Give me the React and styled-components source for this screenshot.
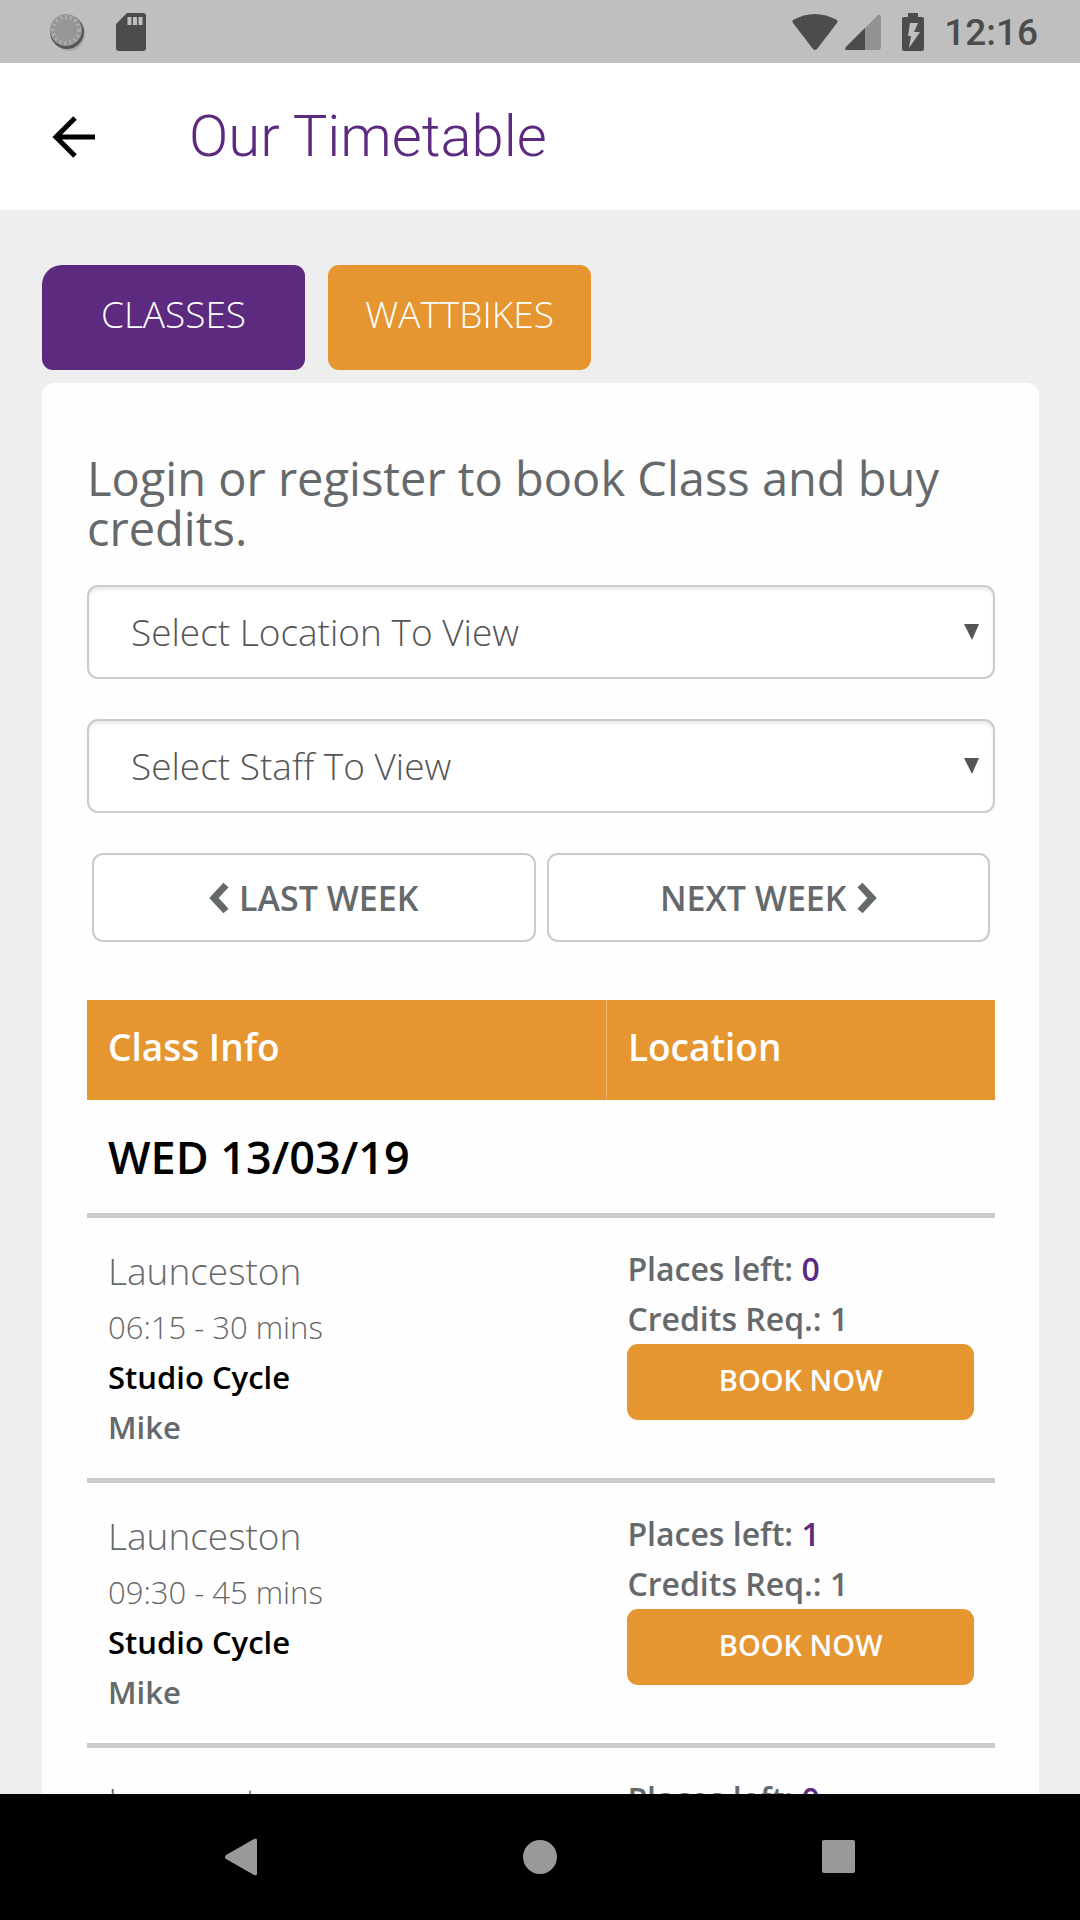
import React from "react";
import styled, { createGlobalStyle } from "styled-components";

const GlobalStyle = createGlobalStyle`
  * { box-sizing: border-box; }
  body { margin: 0; background: #eeeeee; }
  button, select { font: inherit; }
`;

const purple = "#5c2a7e";
const orange = "#e59631";
const grey = "#65696b";
const line = "#cbcbcb";

const Screen = styled.div`
  display: flex;
  flex-direction: column;
  height: 100vh;
  font-family: "Open Sans", "Noto Sans", sans-serif;
  color: ${grey};
`;

const StatusBar = styled.header`
  display: flex;
  align-items: center;
  justify-content: space-between;
  flex: none;
  height: 63px;
  padding: 0 42px 0 50px;
  background: #bfbfbf;
  color: #4c4c4c;
`;

const StatusGroup = styled.div`
  display: flex;
  align-items: center;
  gap: ${(p) => p.$gap}px;
`;

const PowerGroup = styled(StatusGroup)`
  padding-left: 14px;
`;

const Clock = styled.time`
  padding: 2px 0 0 12px;
  font: 500 37px/60px Roboto, sans-serif;
`;

const AppBar = styled.div`
  display: flex;
  align-items: center;
  flex: none;
  height: 147px;
  padding: 0 42px;
  gap: 88px;
  background: #ffffff;
`;

const IconButton = styled.button`
  display: flex;
  padding: 0;
  border: 0;
  background: none;
  color: inherit;
`;

const BackButton = styled(IconButton)`
  padding: 0 4px 0 7px;
  color: #000000;
`;

const Title = styled.h1`
  margin: 0;
  padding-bottom: 2px;
  font: 300 58px/72px Roboto, sans-serif;
  color: ${purple};
`;

const Content = styled.main`
  flex: 1;
  min-height: 0;
  overflow-y: auto;
  scrollbar-width: none;
  padding: 55px 41px 0 42px;
  background: #eeeeee;
`;

const Tabs = styled.nav`
  display: flex;
  gap: 23px;
  margin-bottom: 13px;
`;

const Tab = styled.button`
  width: 263px;
  height: 105px;
  padding: 0 0 8px;
  border: 0;
  border-radius: ${(p) => (p.$active ? "20px" : "11px")} 11px 11px 11px;
  background: ${(p) => (p.$active ? purple : orange)};
  color: #ffffff;
  font-size: 37px;
  font-weight: 300;
`;

const Card = styled.section`
  padding: 68px 42px 0 43px;
  border: 2px solid #ffffff;
  border-bottom: 0;
  border-radius: 12px 12px 0 0;
  background: #fefefe;
  box-shadow: inset 0 0 0 1px #f8f8f8;
`;

const Notice = styled.h2`
  margin: 0 0 32px;
  font-size: 47px;
  font-weight: 400;
  line-height: 50px;
`;

const Field = styled.label`
  display: flex;
  align-items: center;
  position: relative;
  margin-bottom: 40px;
`;

const Select = styled.select`
  appearance: none;
  width: 100%;
  height: 94px;
  padding: 0 60px 2px 42px;
  border: 2px solid ${line};
  border-radius: 11px;
  background: #ffffff;
  box-shadow: inset 0 3px 3px rgba(0, 0, 0, 0.08);
  color: #555555;
  font-size: 37px;
  font-weight: 300;
`;

const Caret = styled.svg`
  position: absolute;
  right: 16px;
  pointer-events: none;
`;

const WeekNav = styled.div`
  display: flex;
  gap: 11px;
  padding: 0 5px;
  margin-bottom: 58px;
`;

const WeekButton = styled.button`
  display: flex;
  flex: 1;
  align-items: center;
  justify-content: center;
  gap: 10px;
  height: 89px;
  padding: 0;
  border: 2px solid ${line};
  border-radius: 11px;
  background: #ffffff;
  color: ${grey};
  font-size: 34px;
  font-weight: 600;
`;

const Table = styled.table`
  width: 100%;
  border-collapse: collapse;
  table-layout: fixed;
`;

const HeadCell = styled.th`
  width: ${(p) => p.$width};
  height: 100px;
  padding: 0 21px 8px;
  background: ${orange};
  color: #ffffff;
  font-size: 37px;
  font-weight: 600;
  text-align: left;

  & + & {
    border-left: 1px solid #edb56f;
  }
`;

const DayCell = styled.th`
  height: 115px;
  padding: 0 21px;
  color: #000000;
  font-size: 45px;
  font-weight: 600;
  text-align: left;
`;

const SessionRow = styled.tr`
  border-top: 5px solid ${line};
`;

const Cell = styled.td`
  height: 265px;
  padding: 26px 21px 0;
  vertical-align: top;
  font-size: ${(p) => p.$size}px;
  font-weight: 600;
  line-height: 50px;
`;

const Venue = styled.div`
  margin-bottom: 4px;
  font-size: 37px;
  font-weight: 300;
  line-height: 54px;
`;

const Time = styled.div`
  font-weight: 300;
`;

const ClassName = styled.div`
  color: #000000;
`;

const Count = styled.span`
  color: ${purple};
`;

const BookButton = styled.button`
  display: block;
  width: 100%;
  height: 76px;
  padding: 0 0 4px;
  border: 0;
  border-radius: 11px;
  background: ${orange};
  color: #ffffff;
  font-size: 29px;
  font-weight: 600;
`;

const SystemNav = styled.footer`
  display: flex;
  align-items: center;
  justify-content: space-around;
  flex: none;
  height: 126px;
  padding: 0 92px;
  background: #000000;
`;

const sessions = [
  { id: 1, venue: "Launceston", places: 0, time: "06:15 - 30 mins", name: "Studio Cycle", staff: "Mike", credits: 1 },
  { id: 2, venue: "Launceston", places: 1, time: "09:30 - 45 mins", name: "Studio Cycle", staff: "Mike", credits: 1 },
  { id: 3, venue: "Launceston", places: 0 },
];

function SyncIcon() {
  return (
    <svg width="36" height="40" viewBox="0 0 36 40" aria-hidden="true">
      <ellipse cx="19" cy="22" rx="16" ry="17" fill="#a8a8a8" />
      <circle cx="17" cy="20" r="17" fill="#555555" />
      <circle cx="16" cy="18" r="16" fill="#969696" />
      <circle cx="16" cy="18" r="13" fill="none" stroke="#adadad" strokeWidth="4" strokeDasharray="2 3" />
    </svg>
  );
}

function SdIcon() {
  return (
    <svg width="30" height="38" viewBox="0 0 30 38" aria-hidden="true">
      <path d="M11 0H27Q30 0 30 3V35Q30 38 27 38H3Q0 38 0 35V11Z" fill="#4c4c4c" />
      <path d="M11.500 4h4v8h-4zM17 4h4v8h-4zM22.500 4h4v8h-4z" fill="#bfbfbf" />
    </svg>
  );
}

function WifiIcon() {
  return (
    <svg width="46" height="38" viewBox="0 0 46 38" aria-hidden="true">
      <path d="M1 7Q23-5 45 7Q46 8 45 10L25 36Q23 38 21 36L1 10Q0 8 1 7Z" fill="#4c4c4c" />
    </svg>
  );
}

function SignalIcon() {
  return (
    <svg width="36" height="36" viewBox="0 0 36 36" aria-hidden="true">
      <path d="M1 33L33 1Q36 0 36 3V33Q36 36 33 36H2Q-1 36 1 33Z" fill="#929292" />
      <path d="M1 33L20 14V36H2Q-1 36 1 33Z" fill="#4c4c4c" />
    </svg>
  );
}

function BatteryIcon() {
  return (
    <svg width="22" height="38" viewBox="0 0 22 38" aria-hidden="true">
      <path d="M6 0H16V4H20Q22 4 22 6V36Q22 38 20 38H2Q0 38 0 36V6Q0 4 2 4H6Z" fill="#4c4c4c" />
      <path d="M8 10H16L12 19H18L7 35L9 23H6Z" fill="#bfbfbf" />
    </svg>
  );
}

function Chevron({ flip }) {
  return (
    <svg width="20" height="32" viewBox="0 0 20 32" aria-hidden="true">
      <path
        d={flip ? "M3 3L15 16L3 29" : "M17 3L5 16L17 29"}
        fill="none"
        stroke="currentColor"
        strokeWidth="7"
      />
    </svg>
  );
}

function SelectField({ text }) {
  return (
    <Field>
      <Select aria-label={text}>
        <option>{text}</option>
      </Select>
      <Caret width="15" height="16" viewBox="0 0 15 16" aria-hidden="true">
        <path d="M0 0H15L8 16Z" fill="#555555" />
      </Caret>
    </Field>
  );
}

function Session({ session }) {
  return (
    <SessionRow>
      <Cell $size={31}>
        <Venue>{session.venue}</Venue>
        {session.time && <Time>{session.time}</Time>}
        {session.name && <ClassName>{session.name}</ClassName>}
        {session.staff && <div>{session.staff}</div>}
      </Cell>
      <Cell $size={32}>
        <div>
          Places left: <Count>{session.places}</Count>
        </div>
        {session.credits && (
          <>
            <div>Credits Req.: {session.credits}</div>
            <BookButton>BOOK NOW</BookButton>
          </>
        )}
      </Cell>
    </SessionRow>
  );
}

export default function App() {
  return (
    <Screen>
      <GlobalStyle />
      <StatusBar>
        <StatusGroup $gap={30}>
          <SyncIcon />
          <SdIcon />
        </StatusGroup>
        <StatusGroup $gap={7}>
          <WifiIcon />
          <SignalIcon />
          <PowerGroup $gap={8}>
            <BatteryIcon />
            <Clock>12:16</Clock>
          </PowerGroup>
        </StatusGroup>
      </StatusBar>
      <AppBar>
        <BackButton aria-label="Back">
          <svg width="48" height="48" viewBox="0 0 48 48">
            <path d="M26 5L7 24L26 43M6 24H46" fill="none" stroke="currentColor" strokeWidth="5" />
          </svg>
        </BackButton>
        <Title>Our Timetable</Title>
      </AppBar>
      <Content>
        <Tabs>
          <Tab $active>CLASSES</Tab>
          <Tab>WATTBIKES</Tab>
        </Tabs>
        <Card>
          <Notice>Login or register to book Class and buy credits.</Notice>
          <SelectField text="Select Location To View" />
          <SelectField text="Select Staff To View" />
          <WeekNav>
            <WeekButton>
              <Chevron />
              LAST WEEK
            </WeekButton>
            <WeekButton>
              NEXT WEEK
              <Chevron flip />
            </WeekButton>
          </WeekNav>
          <Table>
            <thead>
              <tr>
                <HeadCell $width="57.2%">Class Info</HeadCell>
                <HeadCell>Location</HeadCell>
              </tr>
            </thead>
            <tbody>
              <tr>
                <DayCell colSpan={2}>WED 13/03/19</DayCell>
              </tr>
              {sessions.map((session) => (
                <Session key={session.id} session={session} />
              ))}
            </tbody>
          </Table>
        </Card>
      </Content>
      <SystemNav>
        <IconButton aria-label="System back">
          <svg width="36" height="38" viewBox="0 0 36 38">
            <path d="M3 17L31 1Q34 0 34 2V36Q34 38 31 37L3 21Q1 19 3 17Z" fill="#999999" />
          </svg>
        </IconButton>
        <IconButton aria-label="Home">
          <svg width="36" height="36" viewBox="0 0 36 36">
            <circle cx="18" cy="18" r="17" fill="#999999" />
          </svg>
        </IconButton>
        <IconButton aria-label="Recent apps">
          <svg width="36" height="36" viewBox="0 0 36 36">
            <rect x="1" y="1" width="33" height="33" rx="2" fill="#999999" />
          </svg>
        </IconButton>
      </SystemNav>
    </Screen>
  );
}
